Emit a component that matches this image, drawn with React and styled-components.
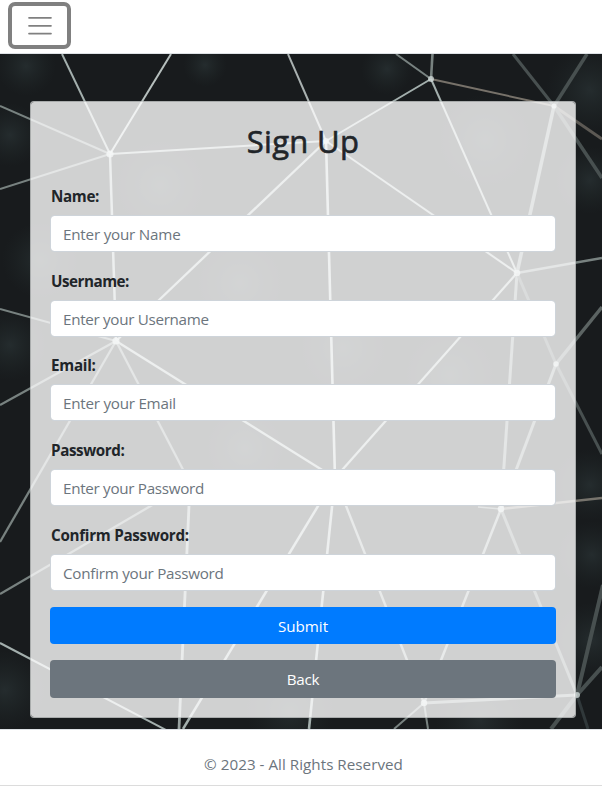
import React from "react";
import styled, { createGlobalStyle } from "styled-components";

const GlobalStyle = createGlobalStyle`
  *, *::before, *::after { box-sizing: border-box; }
  body {
    margin: 0;
    background: #fff;
    color: #212529;
    font-family: "Segoe UI", "Open Sans", "Noto Sans", sans-serif;
    font-size: 15.2px;
    line-height: 24px;
    overflow: hidden;
  }
`;

const Page = styled.div`
  display: flex;
  flex-direction: column;
  height: 786px;
`;

const Header = styled.header`
  height: 54px;
  padding: 2px 8px;
  border-bottom: 1px solid #dee2e6;
`;

const MenuButton = styled.button`
  display: flex;
  align-items: center;
  justify-content: center;
  width: 63px;
  height: 47px;
  padding: 0;
  background: #fff;
  border: 4px solid #808080;
  border-radius: 7px;
`;

const Main = styled.main`
  position: relative;
  isolation: isolate;
  height: 675px;
  padding: 47px 26px 0 30px;
  background: #181b1d;
`;

const Backdrop = styled.svg`
  position: absolute;
  inset: 0;
  z-index: -1;
  width: 100%;
  height: 100%;
`;

const Card = styled.form`
  display: flex;
  flex-direction: column;
  height: 617px;
  padding: 18px 19px 0;
  background: rgba(255, 255, 255, 0.8);
  background-clip: padding-box;
  border: 1px solid rgba(205, 207, 208, 0.8);
  border-radius: 4px;
`;

const Title = styled.h2`
  margin: 0 0 22px;
  font-size: 31px;
  line-height: 42px;
  font-weight: 500;
  -webkit-text-stroke: 0.6px #212529;
  letter-spacing: ${(p) => p.$spacing}px;
  text-align: center;
`;

const Field = styled.div`
  display: flex;
  flex-direction: column;
  height: 84.67px;
`;

const Label = styled.label`
  height: 31px;
  padding-left: 1px;
  font-weight: 700;
  letter-spacing: ${(p) => p.$spacing}px;
`;

const Input = styled.input`
  width: 100%;
  height: 37px;
  padding: 1px 12px 0;
  background: #fff;
  background-clip: padding-box;
  border: 1px solid #ced4da;
  border-radius: 4px;
  font: inherit;
  letter-spacing: ${(p) => p.$spacing}px;
  outline: none;
  &::placeholder { color: #6c757d; opacity: 1; }
`;

const Button = styled.button`
  flex: none;
  height: ${(p) => (p.$secondary ? 38 : 37)}px;
  margin-bottom: 16px;
  padding: ${(p) => (p.$secondary ? "0 0 1px" : "1px 0 0")};
  border: 0;
  border-radius: 4px;
  background: ${(p) => (p.$secondary ? "#6c757d" : "#007bff")};
  color: #fff;
  font: inherit;
  letter-spacing: ${(p) => p.$spacing}px;
`;

const Footer = styled.footer`
  flex: 1;
  padding: 22px 0 0 5px;
  border-top: 1px solid #dee2e6;
  border-bottom: 1px solid #dcdcdc;
  color: #6c757d;
  text-align: center;
  letter-spacing: ${(p) => p.$spacing}px;
`;

const FIELDS = [
  { id: "name", label: "Name:", hint: "Enter your Name", ls: -0.35, ps: -0.2 },
  { id: "username", label: "Username:", hint: "Enter your Username", ls: -0.48, ps: -0.3 },
  { id: "email", label: "Email:", hint: "Enter your Email", ls: -0.25, ps: -0.24 },
  { id: "password", label: "Password:", hint: "Enter your Password", ls: -0.4, ps: -0.29, secret: true },
  { id: "confirm", label: "Confirm Password:", hint: "Confirm your Password", ls: -0.27, ps: -0.25, secret: true },
];

// [x1, y1, x2, y2, color, width]
const BRIGHT = "#a3afad";
const SOFT = "#788280";
const DIM = "#485050";
const BROWN = "#5c5954";
const LINES = [
  [110, 154, 62, 54, BRIGHT, 2],
  [110, 154, 171, 54, "#b6bfbd", 2],
  [110, 154, 0, 106, SOFT, 2],
  [110, 154, 0, 189, SOFT, 2],
  [110, 154, 326, 141, BRIGHT, 2],
  [110, 154, 116, 341, BRIGHT, 2.5],
  [326, 141, 288, 54, "#a9b1b0", 2],
  [326, 141, 431, 79, BRIGHT, 2],
  [326, 141, 116, 341, BRIGHT, 2.3],
  [326, 141, 335, 478, "#b0bab8", 2.6],
  [326, 141, 517, 273, BRIGHT, 2],
  [431, 79, 432.5, 54, SOFT, 2.6],
  [431, 79, 396, 54, SOFT, 2],
  [431, 79, 554, 106, "#77726a", 2],
  [431, 79, 517, 273, BRIGHT, 2],
  [554, 106, 513, 54, DIM, 3],
  [554, 106, 587, 54, DIM, 3.5],
  [554, 106, 602, 139, BROWN, 3],
  [554, 106, 602, 178, DIM, 3.5],
  [554, 106, 517, 273, "#7e8886", 3.5],
  [517, 273, 602, 258, SOFT, 2.6],
  [517, 273, 335, 478, BRIGHT, 2.3],
  [517, 273, 501, 510, SOFT, 3],
  [517, 273, 556, 364, DIM, 3],
  [556, 364, 602, 307, "#5c6463", 3.5],
  [556, 364, 602, 454, DIM, 3],
  [556, 364, 501, 510, SOFT, 3],
  [501, 509, 602, 498, "#77746d", 2.5],
  [501, 509, 478, 507, SOFT, 1.5],
  [501, 509, 424, 703, "#8e9896", 2.5],
  [501, 509, 577, 695, "#66706d", 3],
  [577, 695, 603, 585, DIM, 4],
  [577, 695, 602, 667, DIM, 4],
  [577, 695, 588, 729, "#30383a", 3],
  [577, 695, 551, 729, DIM, 4],
  [577, 695, 424, 703, "#7f8886", 3],
  [424, 703, 335, 478, "#8e9896", 2.4],
  [424, 703, 394, 729, SOFT, 2],
  [424, 703, 428, 729, SOFT, 2],
  [335, 478, 309, 729, BRIGHT, 2.6],
  [335, 478, 183, 729, BRIGHT, 2.5],
  [335, 478, 116, 341, BRIGHT, 2.4],
  [116, 341, 0, 309, SOFT, 2],
  [116, 341, 0, 405, SOFT, 2.3],
  [116, 341, 0, 542, SOFT, 2.3],
  [116, 341, 190, 483, SOFT, 2.3],
  [190, 483, 179, 729, "#98a2a0", 2.8],
  [190, 483, 0, 594, SOFT, 2.3],
  [0, 643, 166, 730, BRIGHT, 2],
];

const NODES = [
  [110, 154, 3.6], [326, 141, 3], [431, 79, 3], [554, 106, 2.6],
  [517, 273, 3.3], [556, 364, 2.8], [501, 509, 3.3], [577, 695, 3],
  [424, 703, 3.2], [116, 341, 3.6],
];

const GLOWS = [
  [26, 66, 30], [10, 135, 32], [160, 185, 44], [205, 65, 22], [387, 69, 26],
  [485, 140, 46], [590, 90, 44], [590, 180, 34], [40, 260, 38], [10, 345, 36],
  [240, 283, 42], [450, 375, 44], [343, 348, 42], [245, 448, 38], [592, 555, 34],
  [5, 690, 40], [290, 711, 44], [480, 720, 44], [592, 640, 38], [590, 485, 36],
];

function Network() {
  return (
    <Backdrop viewBox="0 54 602 675" preserveAspectRatio="none" aria-hidden="true">
      <defs>
        <radialGradient id="glow">
          <stop offset="0" stopColor="#2f3a3c" stopOpacity="0.55" />
          <stop offset="0.5" stopColor="#283233" stopOpacity="0.3" />
          <stop offset="1" stopColor="#222b2c" stopOpacity="0" />
        </radialGradient>
      </defs>
      {GLOWS.map(([x, y, r]) => (
        <circle key={`${x}-${y}`} cx={x} cy={y} r={r} fill="url(#glow)" />
      ))}
      {LINES.map(([x1, y1, x2, y2, color, width], i) => (
        <line key={i} x1={x1} y1={y1} x2={x2} y2={y2} stroke={color} strokeWidth={width} />
      ))}
      {NODES.map(([x, y, r]) => (
        <circle key={`${x}-${y}`} cx={x} cy={y} r={r} fill="#d5dfdd" opacity="0.75" />
      ))}
    </Backdrop>
  );
}

export default function App() {
  return (
    <Page>
      <GlobalStyle />
      <Header>
        <MenuButton type="button" aria-label="Menu">
          <svg width="24" height="20" viewBox="0 0 24 20" fill="none" stroke="#808080" strokeWidth="1.7" strokeLinecap="round">
            <path d="M1 1.8h22M1 9.8h22M1 17.6h22" />
          </svg>
        </MenuButton>
      </Header>
      <Main>
        <Network />
        <Card onSubmit={(e) => e.preventDefault()}>
          <Title $spacing={0.35}>Sign Up</Title>
          {FIELDS.map((f) => (
            <Field key={f.id}>
              <Label htmlFor={f.id} $spacing={f.ls}>{f.label}</Label>
              <Input id={f.id} type={f.secret ? "password" : "text"} placeholder={f.hint} $spacing={f.ps} />
            </Field>
          ))}
          <Button type="submit" $spacing={0}>Submit</Button>
          <Button type="button" $secondary $spacing={-0.3}>Back</Button>
        </Card>
      </Main>
      <Footer $spacing={0.03}>© 2023 - All Rights Reserved</Footer>
    </Page>
  );
}
